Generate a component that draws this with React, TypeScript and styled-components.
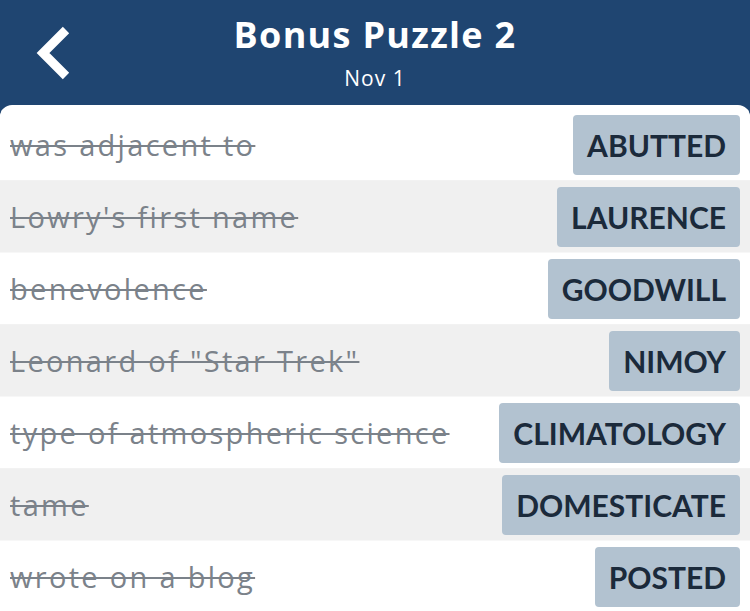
import React from "react";
import styled, { createGlobalStyle } from "styled-components";

const Global = createGlobalStyle`
  html, body { margin: 0; padding: 0; background: #1f4571; }
  body { font-family: "Lato", "Noto Sans", sans-serif; overflow: hidden; }
`;

const Page = styled.div`
  width: 750px;
  height: 611px;
  display: flex;
  flex-direction: column;
  background: #1f4571;
  overflow: hidden;
`;

const Header = styled.header`
  height: 105px;
  display: grid;
  grid-template-columns: 105px 1fr 105px;
  align-items: center;
  color: #fff;
`;

const BackButton = styled.button`
  border: 0;
  background: transparent;
  padding: 0 0 0 32px;
  height: 100%;
  display: flex;
  align-items: center;
  cursor: pointer;
  margin-top: -2px;
`;

const TitleBlock = styled.div`
  display: flex;
  flex-direction: column;
  align-items: center;
  padding-bottom: 2px;
`;

const Title = styled.h1`
  margin: 0;
  font-family: "Open Sans", "Lato", sans-serif;
  font-size: 36px;
  font-weight: 700;
  line-height: 44px;
  letter-spacing: 1.3px;
`;

const Subtitle = styled.div`
  font-family: "Open Sans", "Lato", sans-serif;
  font-size: 21px;
  line-height: 26px;
  margin-top: 8px;
  letter-spacing: 1px;
`;

const Panel = styled.main`
  flex: 1;
  background: #fff;
  border-radius: 12px 12px 0 0;
  padding-top: 4px;
  overflow: hidden;
`;

const Row = styled.div<{ $alt: boolean }>`
  height: 72px;
  box-sizing: border-box;
  display: flex;
  align-items: center;
  justify-content: space-between;
  padding: 0 10px;
  background: ${(p) => (p.$alt ? "#f0f0f0" : "#ffffff")};
  border-bottom: 1px solid ${(p) => (p.$alt ? "#f7f7f7" : "#f2f2f2")};
`;

const Clue = styled.span`
  font-family: "Open Sans", "Lato", sans-serif;
  font-size: 29px;
  letter-spacing: 2.3px;
  color: #7b828a;
  text-decoration: line-through;
  text-decoration-thickness: 2px;
  white-space: nowrap;
`;

const Answer = styled.span`
  height: 60px;
  display: flex;
  align-items: center;
  padding: 0 14px;
  border-radius: 4px;
  background: #b2c2d0;
  color: #1b2a3b;
  font-size: 30px;
  font-weight: 700;
`;

const rows = [
  ["was adjacent to", "ABUTTED"],
  ["Lowry's first name", "LAURENCE"],
  ["benevolence", "GOODWILL"],
  ['Leonard of "Star Trek"', "NIMOY"],
  ["type of atmospheric science", "CLIMATOLOGY"],
  ["tame", "DOMESTICATE"],
  ["wrote on a blog", "POSTED"],
];

export default function App() {
  return (
    <Page>
      <Global />
      <Header>
        <BackButton aria-label="Back">
          <svg width="44" height="60" viewBox="0 0 44 60">
            <path
              d="M34 8 L11 31 L34 54"
              fill="none"
              stroke="#fff"
              strokeWidth="9"
              strokeLinecap="butt"
              strokeLinejoin="miter"
            />
          </svg>
        </BackButton>
        <TitleBlock>
          <Title>Bonus Puzzle 2</Title>
          <Subtitle>Nov 1</Subtitle>
        </TitleBlock>
        <div />
      </Header>
      <Panel>
        {rows.map(([clue, ans], i) => (
          <Row key={i} $alt={i % 2 === 1}>
            <Clue>{clue}</Clue>
            <Answer>{ans}</Answer>
          </Row>
        ))}
      </Panel>
    </Page>
  );
}
